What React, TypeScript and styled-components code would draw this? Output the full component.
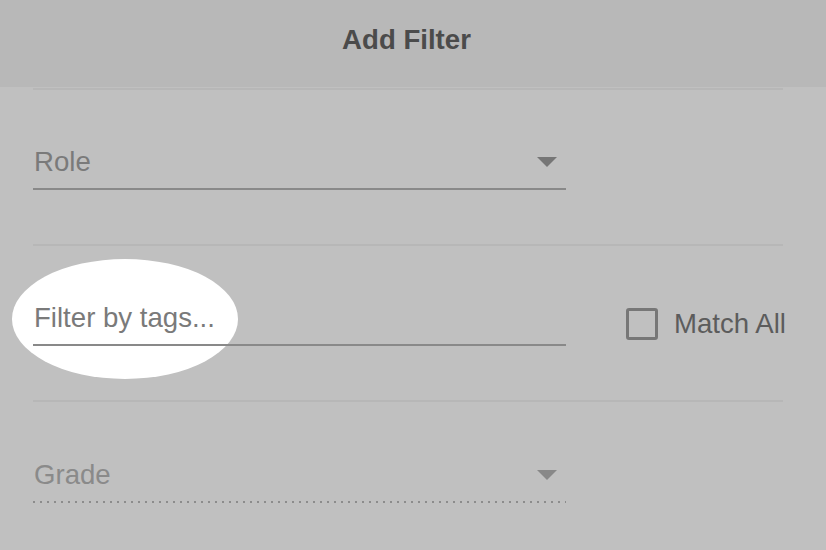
import React from "react";
import styled, { createGlobalStyle } from "styled-components";

const GlobalStyle = createGlobalStyle`
  html, body {
    margin: 0;
    padding: 0;
    background: #c0c0c0;
  }
  body {
    font-family: "Liberation Sans", Arial, sans-serif;
  }
`;

const Dialog = styled.div({
  width: 826,
  height: 550,
  overflow: "hidden",
  position: "relative",
  background: "#c0c0c0",
});

const Header = styled.div({
  height: 87,
  boxSizing: "border-box",
  paddingTop: 24,
  paddingRight: 13,
  background: "#b8b8b8",
  textAlign: "center",
  fontSize: 27.6,
  lineHeight: "32px",
  fontWeight: 700,
  color: "#4b4b4b",
});

const Section = styled.div({
  margin: "1px 43px 0 33px",
  borderTop: "2px solid #b7b7b7",
  height: 155,
  boxSizing: "border-box",
  paddingTop: 56,
  display: "flex",
  alignItems: "flex-start",
});

const Field = styled.div<{ $dotted?: boolean }>`
  width: 533px;
  flex: none;
  display: flex;
  align-items: center;
  justify-content: space-between;
  box-sizing: border-box;
  padding: 0 9px 10px 1px;
  font-size: 27.6px;
  line-height: 32px;
  color: ${(p) => (p.$dotted ? "#8a8a8a" : "#7a7a7a")};
  ${(p) =>
    p.$dotted
      ? `
    background-image: repeating-linear-gradient(to right, #8c8c8c 0 2px, transparent 2px 7px);
    background-size: 100% 2px;
    background-repeat: no-repeat;
    background-position: left bottom;
    padding-bottom: 12px;
    margin-top: 1px;
  `
      : `
    border-bottom: 2px solid #898989;
  `}
`;

const Arrow = styled.span<{ $light?: boolean }>`
  width: 0;
  height: 0;
  border-left: 10px solid transparent;
  border-right: 10px solid transparent;
  border-top: 10px solid ${(p) => (p.$light ? "#888888" : "#767676")};
`;

const CheckLabel = styled.label({
  display: "flex",
  alignItems: "center",
  gap: 16,
  marginLeft: 60,
  marginTop: 6,
  fontSize: 27.6,
  lineHeight: "32px",
  color: "#5c5c5c",
  whiteSpace: "nowrap",
});

const Box = styled.span({
  width: 32,
  height: 32,
  boxSizing: "border-box",
  border: "3px solid #777777",
  borderRadius: 3,
});

const Highlight = styled.div({
  position: "absolute",
  left: 12,
  top: 259,
  width: 226,
  height: 120,
  borderRadius: "50%",
  background: "#ffffff",
});

const TagText = styled.span({
  position: "relative",
  zIndex: 1,
});

const TagField = styled(Field)({
  position: "relative",
  zIndex: 1,
});

export default function App() {
  return (
    <Dialog>
      <GlobalStyle />
      <Header>Add Filter</Header>
      <Section>
        <Field>
          <span>Role</span>
          <Arrow />
        </Field>
      </Section>
      <Highlight />
      <Section>
        <TagField>
          <TagText>Filter by tags...</TagText>
        </TagField>
        <CheckLabel>
          <Box />
          Match All
        </CheckLabel>
      </Section>
      <Section>
        <Field $dotted>
          <span>Grade</span>
          <Arrow $light />
        </Field>
      </Section>
    </Dialog>
  );
}
